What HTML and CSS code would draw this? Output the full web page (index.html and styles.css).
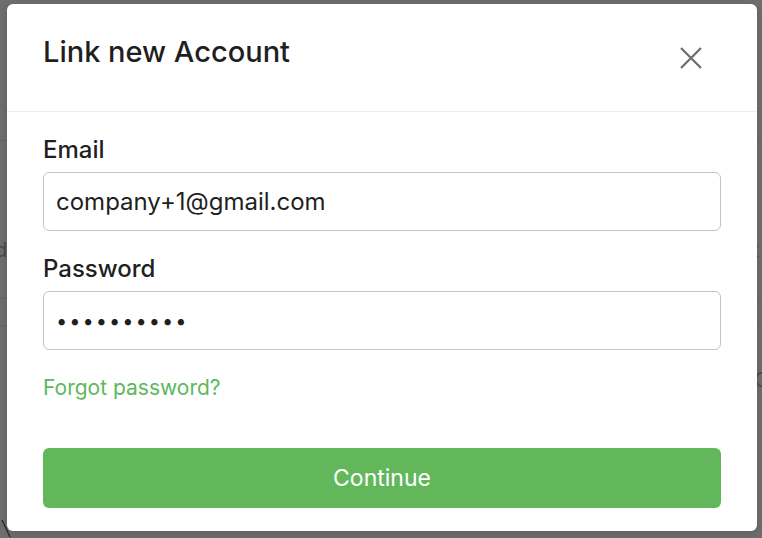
FILE: index.html
```html
<!DOCTYPE html>
<html>
<head>
<meta charset="utf-8">
<link rel="stylesheet" href="styles.css">
</head>
<body>
<div class="backdrop">
  <div class="bg-line l1"></div>
  <div class="bg-line l2"></div>
  <div class="bg-line l3"></div>
  <span class="bg-text t1">d</span>
  <span class="bg-text t2">t</span>
  <span class="bg-text t3">C</span>
  <svg class="bg-curve" width="14" height="20" viewBox="0 0 14 20"><path d="M2 2 Q6 10 10 19" stroke="#222" stroke-width="1.2" fill="none"/></svg>
</div>
<div class="modal">
  <div class="modal-header">
    <h1 class="title">Link new Account</h1>
    <button class="close" aria-label="Close">
      <svg width="22" height="22" viewBox="0 0 22 22"><path d="M1 1 L21 21 M21 1 L1 21" stroke="#6b6b6b" stroke-width="2.2" fill="none"/></svg>
    </button>
  </div>
  <div class="modal-body">
    <label class="label">Email</label>
    <div class="input">company+1@gmail.com</div>
    <label class="label pw">Password</label>
    <div class="input dots">••••••••••</div>
    <a class="forgot">Forgot password?</a>
    <button class="continue">Continue</button>
  </div>
</div>
</body>
</html>
```
FILE: styles.css
```css
html, body {
  margin: 0;
  padding: 0;
}
body {
  width: 762px;
  height: 538px;
  background: #6e6e6e;
  font-family: Inter, "Noto Sans", sans-serif;
  overflow: hidden;
  position: relative;
}
.backdrop {
  position: absolute;
  inset: 0;
}
.bg-line {
  position: absolute;
  left: 0;
  right: 0;
  height: 1px;
  background: #656565;
}
.l1 { top: 140px; }
.l2 { top: 298px; }
.l3 { top: 325px; }
.bg-text {
  position: absolute;
  color: #4a4a4a;
  font-size: 20px;
  line-height: 24px;
}
.t1 { left: -5px; top: 238px; }
.t2 { left: 752px; top: 238px; }
.t3 { left: 754px; top: 368px; }
.bg-curve {
  position: absolute;
  left: 0;
  top: 518px;
}
.modal {
  position: absolute;
  left: 7px;
  top: 4px;
  width: 750px;
  height: 527px;
  background: #fff;
  border-radius: 6px;
  box-shadow: 0 2px 8px rgba(0,0,0,0.15);
}
.modal-header {
  height: 108px;
  border-bottom: 1px solid #ececec;
  display: flex;
  align-items: flex-start;
  justify-content: space-between;
  padding: 30px 55px 0 36px;
  box-sizing: border-box;
}
.title {
  margin: 0;
  font-size: 29px;
  line-height: 36px;
  font-weight: 500;
  color: #1f1f1f;
}
.close {
  border: 0;
  background: none;
  padding: 0;
  width: 22px;
  height: 22px;
  margin-top: 13px;
  cursor: pointer;
}
.close svg { display: block; }
.modal-body {
  padding: 23px 36px 0 36px;
  display: flex;
  flex-direction: column;
}
.label {
  font-size: 24px;
  font-weight: 500;
  color: #1f1f1f;
  line-height: 30px;
}
.label.pw { margin-top: 23px; }
.input {
  margin-top: 7px;
  height: 59px;
  box-sizing: border-box;
  border: 1px solid #c4c4c4;
  border-radius: 6px;
  padding: 0 12px;
  display: flex;
  align-items: center;
  font-size: 24px;
  color: #1f1f1f;
}
.input.dots {
  font-size: 20px;
  letter-spacing: 2px;
}
.forgot {
  margin-top: 26px;
  font-size: 21px;
  color: #5cb85c;
  line-height: 24px;
}
.continue {
  margin-top: 48px;
  height: 60px;
  border: 0;
  border-radius: 6px;
  background: #63b75b;
  color: #fff;
  font-family: inherit;
  font-size: 23px;
  font-weight: 400;
}
```
